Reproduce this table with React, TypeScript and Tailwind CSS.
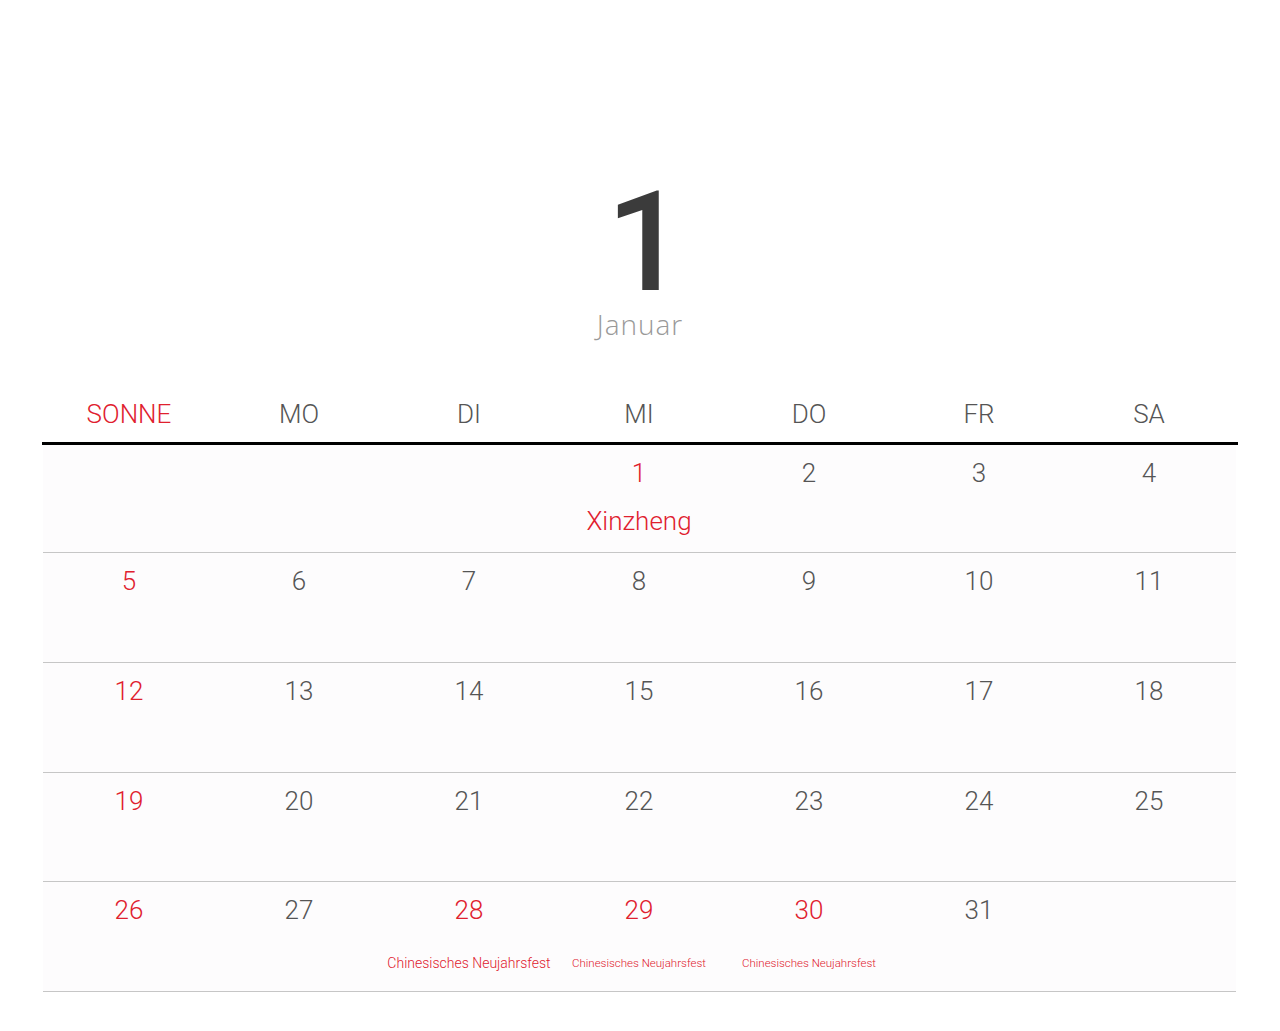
const DAYS = ['SONNE', 'MO', 'DI', 'MI', 'DO', 'FR', 'SA']

type Cell = { n?: number; red?: boolean; label?: string; small?: boolean; big?: boolean }

const rows: Cell[][] = [
  [{}, {}, {}, { n: 1, red: true, label: 'Xinzheng', big: true }, { n: 2 }, { n: 3 }, { n: 4 }],
  [{ n: 5, red: true }, { n: 6 }, { n: 7 }, { n: 8 }, { n: 9 }, { n: 10 }, { n: 11 }],
  [{ n: 12, red: true }, { n: 13 }, { n: 14 }, { n: 15 }, { n: 16 }, { n: 17 }, { n: 18 }],
  [{ n: 19, red: true }, { n: 20 }, { n: 21 }, { n: 22 }, { n: 23 }, { n: 24 }, { n: 25 }],
  [
    { n: 26, red: true },
    { n: 27 },
    { n: 28, red: true, label: 'Chinesisches Neujahrsfest' },
    { n: 29, red: true, label: 'Chinesisches Neujahrsfest', small: true },
    { n: 30, red: true, label: 'Chinesisches Neujahrsfest', small: true },
    { n: 31 },
    {},
  ],
]

function DayCell({ cell, first }: { cell: Cell; first: boolean }) {
  return (
    <div className={`flex flex-col items-center pt-[12px] ${first ? 'h-[107px]' : 'h-[108.75px]'}`}>
      {cell.n !== undefined && (
        <span className={`text-[26px] leading-[32px] font-light ${cell.red ? 'text-[#e0202e]' : 'text-[#555]'}`}>
          {cell.n}
        </span>
      )}
      {cell.label && cell.big && (
        <span className="mt-[16px] text-[26px] leading-[32px] font-light text-[#e0202e]">{cell.label}</span>
      )}
      {cell.label && !cell.big && (
        <span
          className={`mt-[29px] font-light text-[#e0202e] whitespace-nowrap ${cell.small ? 'text-[11.5px] leading-[16px]' : 'text-[14px] leading-[16px]'}`}
        >
          {cell.label}
        </span>
      )}
    </div>
  )
}

export default function App() {
  return (
    <div className="w-[1280px] h-[1031px] bg-white overflow-hidden" style={{ fontFamily: 'Roboto, "Liberation Sans", sans-serif' }}>
      {/* Month header */}
      <div className="flex flex-col items-center pt-[186px]">
        <span className="pl-[12px] text-[140px] leading-[112px] font-medium text-[#3b3b3b]">1</span>
        <span
          className="mt-[12px] text-[28px] leading-[28px] tracking-[1px] font-light text-[#999]"
          style={{ fontFamily: '"Open Sans", sans-serif' }}
        >
          Januar
        </span>
      </div>

      <div className="mx-[42px] mt-[60px]">
        {/* Weekday names */}
        <div className="grid grid-cols-7 border-b-[3px] border-black pb-[12px] pl-[2px] pr-[4px]">
          {DAYS.map((d, i) => (
            <div
              key={d}
              className={`text-center text-[26px] leading-[32px] font-light ${i === 0 ? 'text-[#e0202e]' : 'text-[#555]'}`}
            >
              {d}
            </div>
          ))}
        </div>

        {/* Weeks */}
        <div className="mr-[2px] ml-[1px]">
          {rows.map((r, ri) => (
            <div key={ri} className="grid grid-cols-7 border-b border-[#c6c6c6] bg-[#fdfcfd] pl-[1px] pr-[2px]">
              {r.map((c, ci) => (
                <DayCell key={ci} cell={c} first={ri === 0} />
              ))}
            </div>
          ))}
        </div>
      </div>
    </div>
  )
}
